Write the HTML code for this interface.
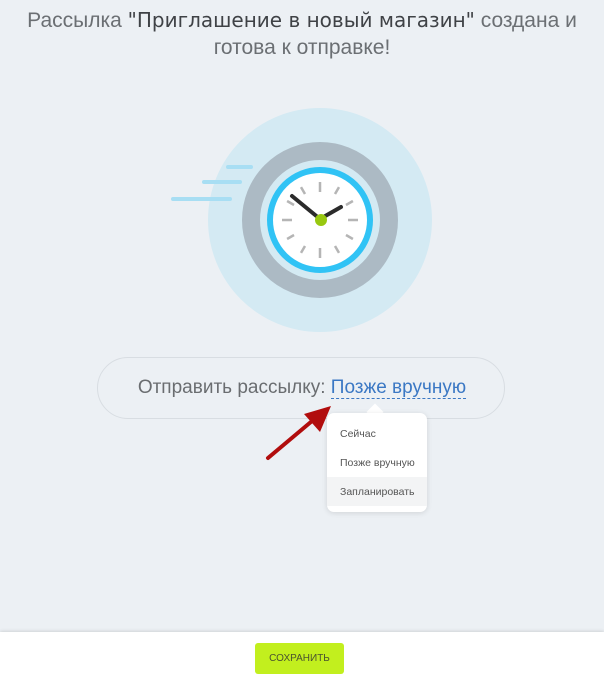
<!DOCTYPE html><html><head><meta charset="utf-8"><style>
body{margin:0;width:604px;height:681px;background:#ecf0f4;font-family:"Liberation Sans",sans-serif;position:relative;overflow:hidden}
.t{position:absolute;left:0;width:604px;text-align:center;font-size:21px;color:#6b6f73;line-height:27px;top:7px}
.t b{color:#3f4246;font-weight:normal;font-family:"DejaVu Sans",sans-serif;font-size:20px}
.pill{position:absolute;left:97px;top:357px;width:408px;height:62px;border:1px solid #d8dde2;border-radius:32px;box-sizing:border-box}
.pt{position:absolute;left:0;width:604px;text-align:center;top:377px;font-size:19px;color:#6a6d70}
.pt span{color:#3b78c4;border-bottom:1px dashed #3b78c4}
.dd{position:absolute;left:327px;top:413px;width:100px;height:99px;background:#fff;border-radius:7px;box-shadow:0 1px 6px rgba(0,0,0,.12);font-size:10.5px;color:#555}
.dd div{position:absolute;left:13px}
.hl{position:absolute;left:0!important;top:64px;width:100px;height:29px;background:#f3f4f5}
.car{position:absolute;left:369px;top:406px;width:12px;height:12px;background:#fff;transform:rotate(45deg)}
.ft{position:absolute;left:0;top:632px;width:604px;height:49px;background:#fff;box-shadow:0 -1px 3px rgba(0,0,0,.12)}
.btn{position:absolute;left:255px;top:11px;width:89px;height:31px;background:#c2ef1e;border-radius:3px;font-size:10px;color:#4a5230;text-align:center;line-height:31px}
</style></head><body>
<div class="t">Рассылка <b>"Приглашение в новый магазин"</b> создана и<br>готова к отправке!</div>
<svg style="position:absolute;left:0;top:0" width="604" height="681">
<circle cx="320" cy="220" r="112" fill="#d4eaf3"/>
<g stroke="#a8def3" stroke-width="4" stroke-linecap="round"><line x1="228" y1="167" x2="251" y2="167"/><line x1="204" y1="182" x2="240" y2="182"/><line x1="173" y1="199" x2="230" y2="199"/></g>
<circle cx="320" cy="220" r="69" fill="none" stroke="#acbac4" stroke-width="18"/>
<circle cx="320" cy="220" r="50" fill="#fff" stroke="#30c3f5" stroke-width="6"/>
<g stroke="#b5b5b5" stroke-width="2.5" transform="translate(320,220)">
<line x1="0" y1="-28" x2="0" y2="-38"/><line x1="0" y1="28" x2="0" y2="38"/><line x1="28" y1="0" x2="38" y2="0"/><line x1="-28" y1="0" x2="-38" y2="0"/>
<g transform="rotate(30)"><line x1="0" y1="-30" x2="0" y2="-38"/><line x1="0" y1="30" x2="0" y2="38"/></g>
<g transform="rotate(60)"><line x1="0" y1="-30" x2="0" y2="-38"/><line x1="0" y1="30" x2="0" y2="38"/></g>
<g transform="rotate(120)"><line x1="0" y1="-30" x2="0" y2="-38"/><line x1="0" y1="30" x2="0" y2="38"/></g>
<g transform="rotate(150)"><line x1="0" y1="-30" x2="0" y2="-38"/><line x1="0" y1="30" x2="0" y2="38"/></g>
</g>
<g stroke="#2b2b2b" stroke-width="4" stroke-linecap="round"><line x1="320" y1="219" x2="292" y2="196"/><line x1="320" y1="219" x2="341" y2="207"/></g>
<circle cx="321" cy="220" r="6" fill="#98c810"/>
</svg>
<div class="pill"></div>
<div class="pt">Отправить рассылку: <span>Позже вручную</span></div>
<div class="car"></div>
<div class="dd"><div class="hl"></div><div style="top:15px">Сейчас</div><div style="top:44px">Позже вручную</div><div style="top:73px">Запланировать</div></div>
<svg style="position:absolute;left:0;top:0" width="604" height="681">
<line x1="268" y1="458" x2="318" y2="416" stroke="#b10d0d" stroke-width="4" stroke-linecap="round"/>
<polygon points="331,406 304,414 320,432" fill="#b10d0d"/>
</svg>
<div class="ft"><div class="btn">СОХРАНИТЬ</div></div>
</body></html>
